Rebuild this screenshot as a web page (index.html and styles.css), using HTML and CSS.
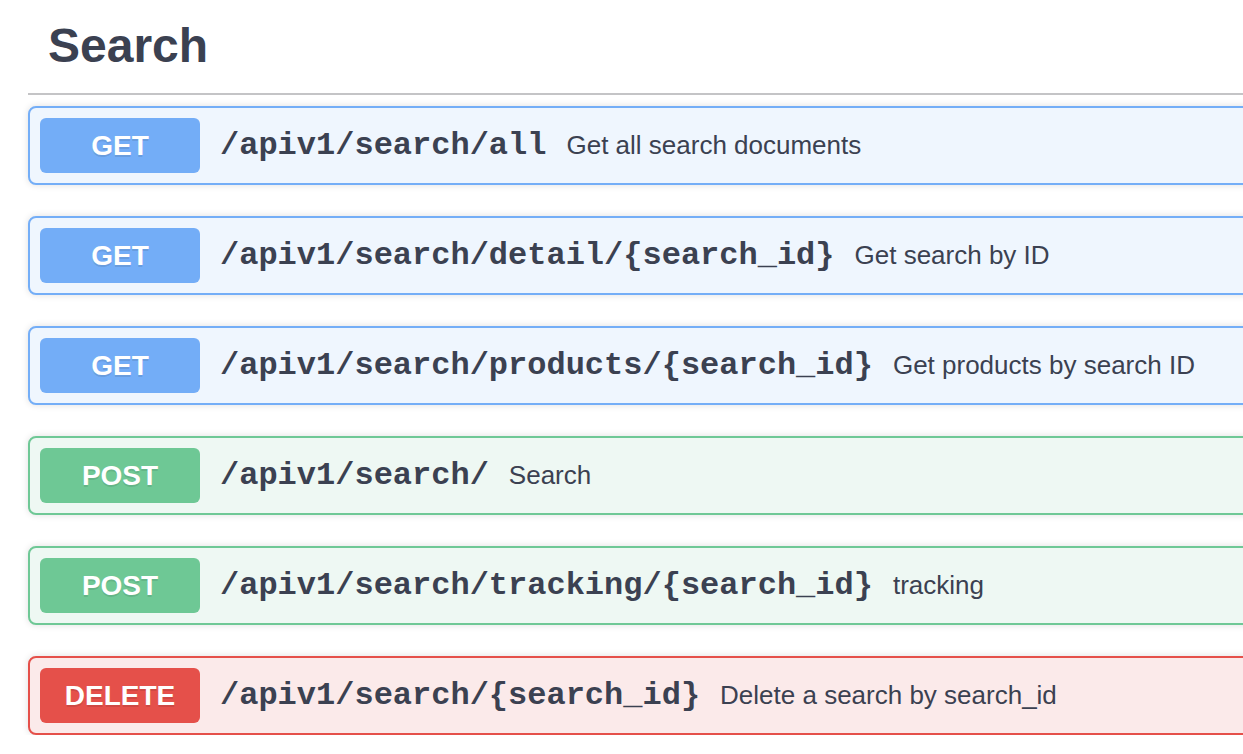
FILE: index.html
```html
<!DOCTYPE html>
<html>
<head>
<meta charset="utf-8">
<link rel="stylesheet" href="styles.css">
</head>
<body>
<div class="page">
  <section class="tag-section">
    <h3 class="tag-title">Search</h3>
    <div class="ops">
      <div class="op op-get">
        <span class="method">GET</span>
        <span class="path">/apiv1/search/all</span>
        <span class="desc">Get all search documents</span>
      </div>
      <div class="op op-get">
        <span class="method">GET</span>
        <span class="path">/apiv1/search/detail/{search_id}</span>
        <span class="desc">Get search by ID</span>
      </div>
      <div class="op op-get">
        <span class="method">GET</span>
        <span class="path">/apiv1/search/products/{search_id}</span>
        <span class="desc">Get products by search ID</span>
      </div>
      <div class="op op-post">
        <span class="method">POST</span>
        <span class="path">/apiv1/search/</span>
        <span class="desc">Search</span>
      </div>
      <div class="op op-post">
        <span class="method">POST</span>
        <span class="path">/apiv1/search/tracking/{search_id}</span>
        <span class="desc">tracking</span>
      </div>
      <div class="op op-delete">
        <span class="method">DELETE</span>
        <span class="path">/apiv1/search/{search_id}</span>
        <span class="desc">Delete a search by search_id</span>
      </div>
    </div>
  </section>
</div>
</body>
</html>
```

FILE: styles.css
```css
html, body {
  margin: 0;
  padding: 0;
  background: #ffffff;
  overflow: hidden;
}

.page {
  padding-left: 28px;
  width: 1300px;
  font-family: "Liberation Sans", Arial, sans-serif;
  color: #3b4151;
}

.tag-title {
  margin: 0 0 11px 0;
  height: 95px;
  box-sizing: border-box;
  padding: 16px 0 0 20px;
  font-size: 48px;
  line-height: 60px;
  font-weight: 700;
  color: #3b4151;
  border-bottom: 2px solid #c4c4c6;
}

.ops {
  display: flex;
  flex-direction: column;
  gap: 31px;
}

.op {
  display: flex;
  align-items: center;
  height: 79px;
  box-sizing: border-box;
  padding: 0 10px;
  border: 2px solid;
  border-radius: 8px;
  box-shadow: 0 0 7px rgba(0, 0, 0, 0.13);
}

.method {
  display: flex;
  align-items: center;
  justify-content: center;
  width: 160px;
  height: 55px;
  flex: none;
  border-radius: 6px;
  color: #ffffff;
  font-family: "Liberation Sans", Arial, sans-serif;
  font-weight: 700;
  font-size: 28px;
  text-shadow: 0 2px 0 rgba(0, 0, 0, 0.1);
}

.path {
  padding: 0 20px;
  font-family: "Liberation Mono", "Courier New", monospace;
  font-weight: 700;
  font-size: 32px;
  color: #3b4151;
  white-space: nowrap;
}

.desc {
  font-family: "Liberation Sans", Arial, sans-serif;
  font-size: 26px;
  color: #3b4151;
  white-space: nowrap;
}

.op-get {
  background: #eff6fe;
  border-color: #74aef7;
}
.op-get .method {
  background: #73adf7;
}

.op-post {
  background: #eef8f3;
  border-color: #6fc896;
}
.op-post .method {
  background: #6ec895;
}

.op-delete {
  background: #fbeaea;
  border-color: #e5504a;
}
.op-delete .method {
  background: #e5504a;
}
```
